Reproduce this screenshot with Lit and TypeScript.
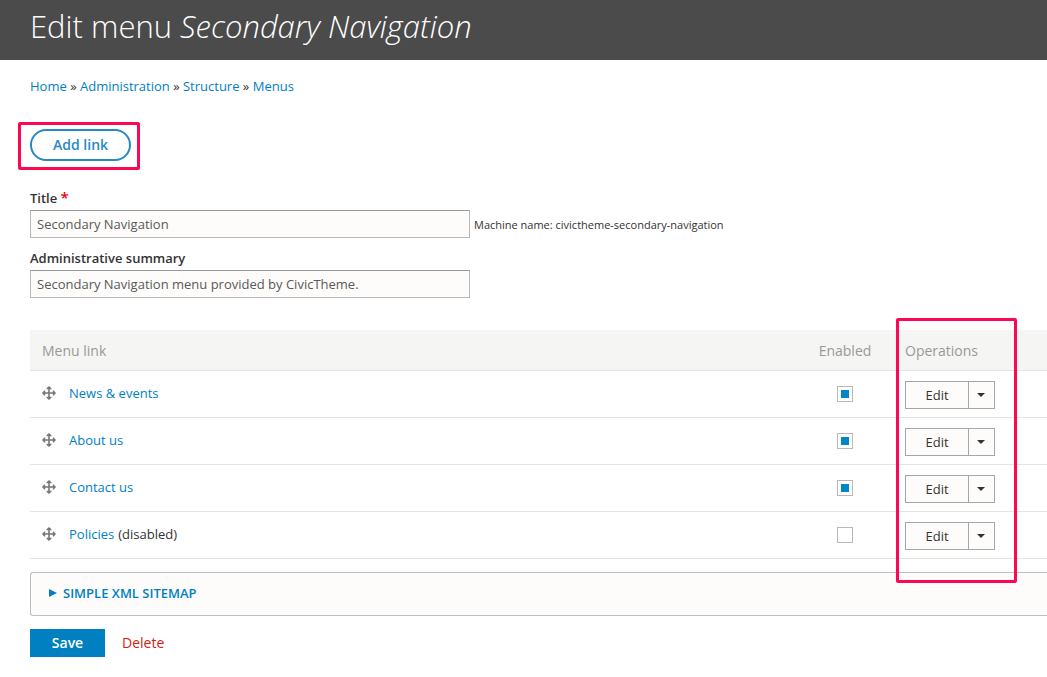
import { LitElement, html, css, svg } from "lit";
import { customElement, state } from "lit/decorators.js";

interface MenuLink {
  name: string;
  enabled: boolean;
}

const moveIcon = svg`
  <path d="M7 0 L9.5 2.2 V3.2 H7.8 V6.2 H10.8 V4.5 H11.8 L14 7 L11.8 9.5 H10.8 V7.8 H7.8 V10.8 H9.5 V11.8 L7 14 L4.5 11.8 V10.8 H6.2 V7.8 H3.2 V9.5 H2.2 L0 7 L2.2 4.5 H3.2 V6.2 H6.2 V3.2 H4.5 V2.2 Z" fill="#787878"/>`;

@customElement("app-root")
export class AppRoot extends LitElement {
  @state() private links: MenuLink[] = [
    { name: "News & events", enabled: true },
    { name: "About us", enabled: true },
    { name: "Contact us", enabled: true },
    { name: "Policies", enabled: false },
  ];

  static styles = css`
    :host {
      display: block;
      font-family: "Open Sans", sans-serif;
      font-size: 13px;
      line-height: 20px;
      color: #333;
      background: #fff;
      overflow-x: hidden;
    }
    * {
      box-sizing: border-box;
    }
    a {
      color: #007fc2;
      text-decoration: none;
    }
    input,
    button {
      font: inherit;
      margin: 0;
    }
    .header {
      background: #4b4b4b;
      padding: 4px 30px 12px;
    }
    .title {
      margin: 0;
      color: #fff;
      font-size: 31px;
      line-height: 44px;
      font-weight: 300;
    }
    .content {
      padding: 16px 0 20px 30px;
    }
    .add {
      position: relative;
      display: inline-flex;
      margin: 33px 0 26px;
    }
    .add-link {
      height: 32px;
      padding: 4px 21px;
      border: 2px solid #2489c6;
      border-radius: 16px;
      color: #2489c6;
      font-size: 14px;
      font-weight: 600;
    }
    .mark {
      position: absolute;
      border: 3px solid #fb0753;
      border-radius: 2px;
      pointer-events: none;
    }
    .mark-add {
      inset: -7px -9px -9px -12px;
    }
    .mark-operations {
      top: -12px;
      right: 30px;
      bottom: -24px;
      width: 121px;
    }
    .field {
      display: grid;
      grid-template-columns: 440px 1fr;
      column-gap: 4px;
      align-items: center;
      margin-bottom: 9px;
    }
    .label {
      grid-column: 1 / -1;
      padding-bottom: 1px;
      font-weight: 600;
      line-height: 22px;
    }
    .required {
      color: #e00;
      font-size: 15px;
      line-height: 16px;
    }
    .text {
      width: 100%;
      height: 28px;
      padding: 0 6px;
      border: 1px solid #b8b8b8;
      border-top-color: #999;
      border-radius: 0;
      background: #fdfcfa;
      color: #595959;
    }
    .machine {
      padding-top: 2px;
      font-size: 11px;
    }
    .table-wrap {
      position: relative;
      margin: 32px 0 13px;
    }
    .links {
      width: 100%;
      border-collapse: collapse;
      table-layout: fixed;
    }
    .links th {
      height: 40px;
      padding: 2px 12px 0;
      background: #f5f5f3;
      border-bottom: 1px solid #e6e4df;
      color: #999;
      font-size: 14px;
      font-weight: 500;
      text-align: left;
    }
    .links td {
      height: 47px;
      padding: 0 12px;
      border-bottom: 1px solid #e6e4df;
    }
    .links .col-enabled {
      width: 96px;
      text-align: center;
    }
    .links .col-operations {
      width: 154px;
    }
    .name {
      display: flex;
      align-items: center;
      padding-bottom: 2px;
    }
    .move {
      width: 14px;
      height: 14px;
      margin-right: 13px;
    }
    .state {
      margin-left: 4px;
    }
    .check {
      appearance: none;
      display: block;
      width: 16px;
      height: 16px;
      margin: 0 auto;
      border: 1px solid #b8b8b8;
      background: #fff;
    }
    .check:checked {
      background: #0085c7;
      background-clip: content-box;
      padding: 3px;
    }
    .ops {
      display: flex;
      width: 90px;
      height: 28px;
      margin-top: 2px;
      border: 1px solid #a6a6a6;
      background: #fdfcfa;
    }
    .ops button {
      padding: 0;
      border: 0;
      background: none;
      color: #333;
    }
    .ops .edit {
      flex: 1;
    }
    .ops .more {
      display: flex;
      align-items: center;
      justify-content: center;
      width: 26px;
      padding: 1px 1px 0 0;
      border-left: 1px solid #a6a6a6;
    }
    .panel {
      border: 1px solid #bfbfbf;
      border-right: 0;
      border-radius: 3px 0 0 3px;
      background: #fdfcfa;
    }
    .summary {
      display: flex;
      align-items: center;
      gap: 6px;
      padding: 10px 17px 12px;
      color: #007fc2;
      font-weight: 600;
      text-transform: uppercase;
      list-style: none;
      cursor: pointer;
    }
    .actions {
      display: flex;
      align-items: center;
      gap: 17px;
      margin-top: 13px;
      font-size: 14px;
    }
    .save {
      width: 75px;
      height: 28px;
      padding: 0;
      border: 0;
      background: #0080c0;
      color: #fff;
      font-weight: 600;
    }
    .delete {
      color: #d5210f;
    }
  `;

  private toggle(index: number) {
    this.links = this.links.map((link, i) =>
      i === index ? { ...link, enabled: !link.enabled } : link
    );
  }

  private renderRow(link: MenuLink, index: number) {
    return html`
      <tr>
        <td>
          <div class="name">
            <svg class="move" viewBox="0 0 14 14" aria-hidden="true">${moveIcon}</svg>
            <a href="#">${link.name}</a>
            ${link.enabled ? "" : html`<span class="state">(disabled)</span>`}
          </div>
        </td>
        <td class="col-enabled">
          <input
            class="check"
            type="checkbox"
            aria-label="Enable ${link.name}"
            .checked=${link.enabled}
            @change=${() => this.toggle(index)}
          />
        </td>
        <td class="col-operations">
          <div class="ops">
            <button class="edit" type="button">Edit</button>
            <button class="more" type="button" aria-label="List additional actions">
              <svg width="8" height="4" viewBox="0 0 8 4"><path d="M0 0H8L4 4Z" fill="#333" /></svg>
            </button>
          </div>
        </td>
      </tr>
    `;
  }

  render() {
    return html`
      <header class="header">
        <h1 class="title">Edit menu <em>Secondary Navigation</em></h1>
      </header>
      <main class="content">
        <nav aria-label="Breadcrumb">
          <a href="#">Home</a> » <a href="#">Administration</a> » <a href="#">Structure</a> »
          <a href="#">Menus</a>
        </nav>
        <div class="add">
          <a class="add-link" href="#">Add link</a>
          <div class="mark mark-add"></div>
        </div>
        <form @submit=${(e: Event) => e.preventDefault()}>
          <div class="field">
            <label class="label" for="title">Title <span class="required">*</span></label>
            <input class="text" id="title" type="text" required .value=${"Secondary Navigation"} />
            <span class="machine">Machine name: civictheme-secondary-navigation</span>
          </div>
          <div class="field">
            <label class="label" for="summary">Administrative summary</label>
            <input
              class="text"
              id="summary"
              type="text"
              .value=${"Secondary Navigation menu provided by CivicTheme."}
            />
          </div>
          <div class="table-wrap">
            <table class="links">
              <thead>
                <tr>
                  <th>Menu link</th>
                  <th class="col-enabled">Enabled</th>
                  <th class="col-operations">Operations</th>
                </tr>
              </thead>
              <tbody>
                ${this.links.map((link, i) => this.renderRow(link, i))}
              </tbody>
            </table>
            <div class="mark mark-operations"></div>
          </div>
          <details class="panel">
            <summary class="summary">
              <svg width="9" height="8" viewBox="0 0 9 8"><path d="M1 0L9 4L1 8Z" fill="#007fc2" /></svg>
              Simple XML Sitemap
            </summary>
          </details>
          <div class="actions">
            <button class="save" type="submit">Save</button>
            <a class="delete" href="#">Delete</a>
          </div>
        </form>
      </main>
    `;
  }
}
